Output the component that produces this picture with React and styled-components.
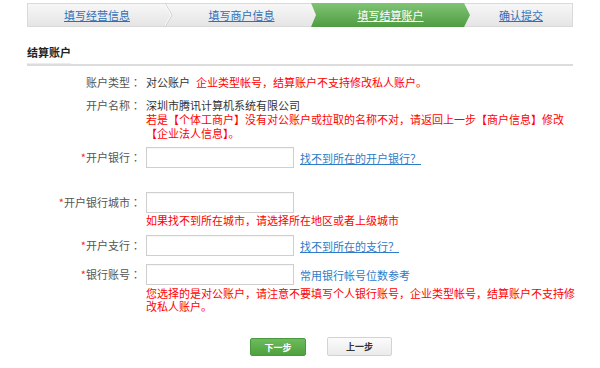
import React from "react";
import styled, { createGlobalStyle } from "styled-components";

const Global = createGlobalStyle`
  html, body { margin: 0; padding: 0; background: #fff; }
  body { font-family: "Noto Sans CJK SC", "Noto Sans", sans-serif; font-size: 11px; color: #333; }
  * { box-sizing: border-box; }
`;

const Page = styled.div`
  width: 600px;
  height: 368px;
  padding: 3px 27px 0;
  overflow: hidden;
`;

const Steps = styled.div`
  display: flex;
  height: 24px;
  border: 1px solid #dadada;
  background: linear-gradient(#f7f7f7, #e5e5e5);
`;

const Step = styled.div`
  position: relative;
  width: ${(p) => p.$w}px;
  flex: none;
  display: flex;
  align-items: center;
  justify-content: center;
  padding-left: ${(p) => p.$pl || 0}px;
  z-index: ${(p) => (p.$active ? 2 : 1)};
  &::before {
    content: "";
    display: ${(p) => (p.$active ? "block" : "none")};
    position: absolute;
    top: -1px;
    bottom: -1px;
    left: 0;
    right: -6px;
    background: linear-gradient(#80c474, #4f9c42);
    clip-path: polygon(0 0, calc(100% - 6px) 0, 100% 50%, calc(100% - 6px) 100%, 0 100%, 5px 50%);
  }
`;

const StepLink = styled.a`
  position: relative;
  font-size: 11px;
  line-height: 14px;
  text-decoration: underline;
  color: ${(p) => (p.$active ? "#fff" : "#2f6fb8")};
  cursor: pointer;
`;

const Chevron = styled.svg`
  position: absolute;
  right: -7px;
  top: -1px;
  width: 8px;
  height: 24px;
  z-index: 3;
`;

const Header = styled.div`
  margin-top: 17px;
  border-bottom: 2px solid #dcdcdc;
`;

const Title = styled.div`
  display: inline-block;
  font-weight: bold;
  font-size: 11px;
  line-height: 14px;
  color: #222;
  padding-bottom: 4px;
  border-bottom: 1px solid #ececec;
`;

const Row = styled.div`
  display: flex;
  align-items: flex-start;
  margin-top: ${(p) => p.$mt}px;
`;

const Label = styled.div`
  width: 114px;
  flex: none;
  text-align: right;
  color: #555;
  line-height: ${(p) => (p.$input ? 21 : 14)}px;
  white-space: nowrap;
`;

const Colon = styled.span`
  font-family: "Noto Sans CJK TC", "Noto Sans CJK SC", sans-serif;
`;

const Star = styled.span`
  color: #f22;
`;

const Field = styled.div`
  flex: none;
  width: 431px;
  margin-left: 5px;
  line-height: 14px;
`;

const Line = styled.div`
  display: flex;
  align-items: center;
`;

const Value = styled.div`
  color: #333;
`;

const Red = styled.div`
  color: #f00;
  line-height: ${(p) => p.$lh || 14}px;
  margin-top: ${(p) => p.$mt || 0}px;
`;

const RedInline = styled.span`
  color: #f00;
  margin-left: ${(p) => p.$ml || 0}px;
`;

const Input = styled.input`
  width: 148px;
  height: 21px;
  border: 1px solid #cfcfcf;
  box-shadow: inset 0 1px 1px rgba(0, 0, 0, 0.04);
  padding: 0 4px;
  font: inherit;
  outline: none;
`;

const Link = styled.a`
  margin-left: 6px;
  color: #2f7bc8;
  text-decoration: ${(p) => (p.$plain ? "none" : "underline")};
  line-height: 14px;
  cursor: pointer;
`;

const Actions = styled.div`
  display: flex;
  align-items: center;
  margin-top: 23px;
  padding-left: 223px;
  gap: 21px;
`;

const Button = styled.button`
  height: ${(p) => (p.$primary ? 18 : 19)}px;
  width: ${(p) => (p.$primary ? 56 : 65)}px;
  margin-top: ${(p) => (p.$primary ? 2 : 0)}px;
  border: 1px solid ${(p) => (p.$primary ? "#4a9a3d" : "#d3d3d3")};
  border-radius: 2px;
  background: ${(p) =>
    p.$primary ? "linear-gradient(#6cbb5c, #4fa03f)" : "linear-gradient(#fbfbfb, #ebebeb)"};
  color: ${(p) => (p.$primary ? "#fff" : "#333")};
  font-family: inherit;
  font-size: 9px;
  font-weight: bold;
  padding: 0;
  cursor: pointer;
`;

const steps = [
  { text: "填写经营信息", w: 138 },
  { text: "填写商户信息", w: 145, pl: 6 },
  { text: "填写结算账户", w: 153, active: true, pl: 6 },
  { text: "确认提交", w: 108, pl: 6 },
];

function ChevronMark() {
  return (
    <Chevron viewBox="0 0 8 24">
      <polyline points="0,0 7,12 0,24" fill="none" stroke="#cfcfcf" strokeWidth="1" />
      <polyline points="-1,0 6,12 -1,24" fill="none" stroke="#fbfbfb" strokeWidth="1" />
    </Chevron>
  );
}

function FieldLabel({ children, input, required }) {
  return (
    <Label $input={input}>
      {required && <Star>*</Star>}
      {children}
      <Colon>：</Colon>
    </Label>
  );
}

export default function App() {
  return (
    <>
      <Global />
      <Page>
        <Steps>
          {steps.map((s, i) => (
            <Step key={s.text} $w={s.w} $pl={s.pl} $active={s.active}>
              <StepLink $active={s.active}>{s.text}</StepLink>
              {i === 0 && <ChevronMark />}
            </Step>
          ))}
        </Steps>
        <Header>
          <Title>结算账户</Title>
        </Header>

        <Row $mt={9}>
          <FieldLabel>账户类型</FieldLabel>
          <Field>
            <span>对公账户</span>
            <RedInline $ml={6}>企业类型帐号，结算账户不支持修改私人账户。</RedInline>
          </Field>
        </Row>

        <Row $mt={9}>
          <FieldLabel>开户名称</FieldLabel>
          <Field>
            <Value>深圳市腾讯计算机系统有限公司</Value>
            <Red>若是【个体工商户】没有对公账户或拉取的名称不对，请返回上一步【商户信息】修改【企业法人信息】。</Red>
          </Field>
        </Row>

        <Row $mt={7}>
          <FieldLabel input required>开户银行</FieldLabel>
          <Field>
            <Line>
              <Input />
              <Link>找不到所在的开户银行？</Link>
            </Line>
          </Field>
        </Row>

        <Row $mt={24}>
          <FieldLabel input required>开户银行城市</FieldLabel>
          <Field>
            <Input />
            <Red>如果找不到所在城市，请选择所在地区或者上级城市</Red>
          </Field>
        </Row>

        <Row $mt={8}>
          <FieldLabel input required>开户支行</FieldLabel>
          <Field>
            <Line>
              <Input />
              <Link>找不到所在的支行？</Link>
            </Line>
          </Field>
        </Row>

        <Row $mt={8}>
          <FieldLabel input required>银行账号</FieldLabel>
          <Field>
            <Line>
              <Input />
              <Link $plain>常用银行帐号位数参考</Link>
            </Line>
            <Red $mt={2} $lh={13}>
              您选择的是对公账户，请注意不要填写个人银行账号，企业类型帐号，结算账户不支持修改私人账户。
            </Red>
          </Field>
        </Row>

        <Actions>
          <Button $primary>下一步</Button>
          <Button>上一步</Button>
        </Actions>
      </Page>
    </>
  );
}
